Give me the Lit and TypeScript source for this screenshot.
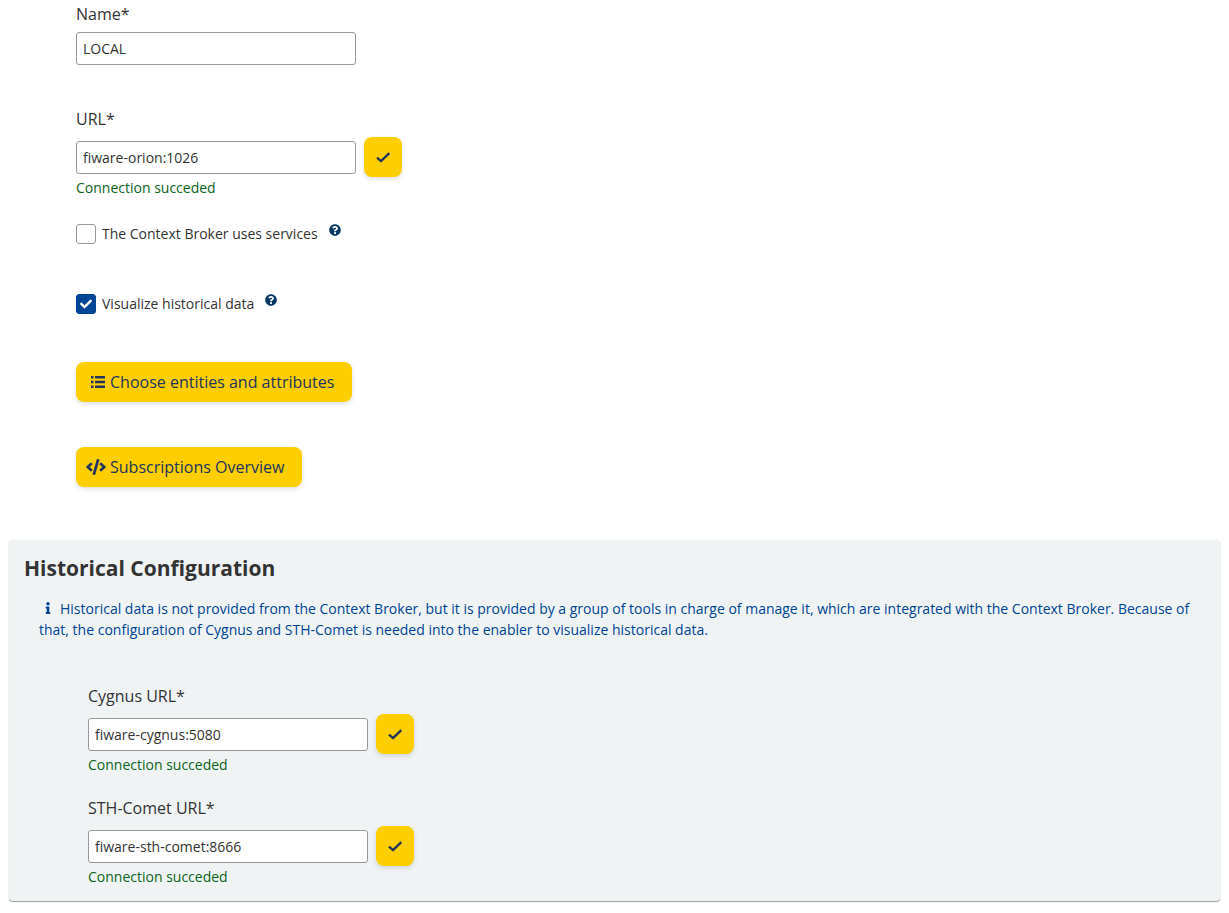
import { LitElement, html, svg, css } from "lit";
import { customElement, property } from "lit/decorators.js";

const icons = {
  check: {
    box: "0 0 18 18",
    art: svg`<path d="M3 9.600 7 13.200 15.300 5.200" fill="none" stroke="currentColor" stroke-width="2.300" stroke-linejoin="round"/>`,
  },
  tick: {
    box: "0 0 512 512",
    art: svg`<path d="M173.898 439.404l-166.4-166.4c-9.997-9.997-9.997-26.206 0-36.204l36.203-36.204c9.997-9.998 26.207-9.998 36.204 0L192 312.69 432.095 72.596c9.997-9.997 26.207-9.997 36.204 0l36.203 36.204c9.997 9.997 9.997 26.206 0 36.204l-294.4 294.401c-9.998 9.997-26.207 9.997-36.204-.001z" fill="currentColor"/>`,
  },
  list: {
    box: "0 0 14 12",
    art: svg`<path d="M0 0h2.5v2.5H0zM4 0h10v2.5H4zM0 4.7h2.5v2.6H0zM4 4.7h10v2.6H4zM0 9.5h2.5V12H0zM4 9.5h10V12H4z" fill="currentColor"/>`,
  },
  code: {
    box: "0 0 640 512",
    art: svg`<path d="M278.9 511.5l-61-17.7c-6.4-1.8-10-8.5-8.2-14.9L346.2 8.7c1.8-6.4 8.5-10 14.9-8.2l61 17.7c6.4 1.8 10 8.5 8.2 14.9L293.8 503.3c-1.9 6.4-8.5 10.1-14.9 8.2zm-114-112.2l43.5-46.4c4.6-4.9 4.3-12.7-.8-17.2L117 256l90.6-79.7c5.1-4.5 5.5-12.3.8-17.2l-43.5-46.4c-4.5-4.8-12.1-5.1-17-.5L3.8 247.2c-5.1 4.7-5.1 12.8 0 17.5l144.1 135.1c4.9 4.6 12.5 4.4 17-.5zm327.2.6l144.1-135.1c5.1-4.7 5.1-12.8 0-17.5L492.1 112.1c-4.8-4.5-12.4-4.3-17 .5L431.6 159c-4.6 4.9-4.3 12.7.8 17.2L523 256l-90.6 79.7c-5.1 4.5-5.5 12.3-.8 17.2l43.5 46.4c4.5 4.9 12.1 5.1 17 .6z" fill="currentColor"/>`,
  },
  question: {
    box: "0 0 512 512",
    art: svg`<path d="M504 256c0 136.997-111.043 248-248 248S8 392.997 8 256C8 119.083 119.043 8 256 8s248 111.083 248 248zM262.655 90c-54.497 0-89.255 22.957-116.549 63.758-3.536 5.286-2.353 12.415 2.715 16.258l34.699 26.31c5.205 3.947 12.621 3.008 16.665-2.122 17.864-22.658 30.113-35.797 57.303-35.797 20.429 0 45.698 13.148 45.698 32.958 0 14.976-12.363 22.667-32.534 33.976C247.128 238.528 216 254.941 216 296v4c0 6.627 5.373 12 12 12h56c6.627 0 12-5.373 12-12v-1.333c0-28.462 83.186-29.647 83.186-106.667 0-58.002-60.165-102-116.531-102zM256 338c-25.365 0-46 20.635-46 46 0 25.364 20.635 46 46 46s46-20.636 46-46c0-25.365-20.635-46-46-46z" fill="currentColor"/>`,
  },
  info: {
    box: "0 0 192 512",
    art: svg`<path d="M20 424.229h20V279.771H20c-11.046 0-20-8.954-20-20V212c0-11.046 8.954-20 20-20h112c11.046 0 20 8.954 20 20v212.229h20c11.046 0 20 8.954 20 20V492c0 11.046-8.954 20-20 20H20c-11.046 0-20-8.954-20-20v-47.771c0-11.046 8.954-20 20-20zM96 0C56.235 0 24 32.235 24 72s32.235 72 72 72 72-32.235 72-72S135.764 0 96 0z" fill="currentColor"/>`,
  },
};

const icon = (name: keyof typeof icons) =>
  html`<svg class="icon ${name}" viewBox=${icons[name].box} aria-hidden="true">${icons[name].art}</svg>`;

const base = css`
  * {
    box-sizing: border-box;
  }
  button {
    display: inline-flex;
    align-items: center;
    height: 40px;
    padding: 0;
    border: 0;
    border-radius: 8px;
    background: #ffce00;
    color: #22345c;
    font: inherit;
    line-height: 24px;
    box-shadow: 0 2px 5px rgba(0, 0, 0, 0.13);
    cursor: pointer;
  }
  .icon {
    flex: none;
    display: block;
  }
`;

@customElement("url-field")
class UrlField extends LitElement {
  @property() label = "";
  @property() value = "";
  @property() status = "";
  @property({ type: Boolean }) testable = false;

  static styles = [
    base,
    css`
      :host {
        display: block;
      }
      label {
        display: block;
        line-height: 24px;
        margin-bottom: 6px;
      }
      .row {
        display: flex;
        align-items: center;
        gap: 8px;
      }
      input {
        width: 280px;
        height: 33px;
        padding: 0 6px;
        border: 1px solid #999;
        border-radius: 3px;
        background: #fff;
        color: #333;
        font: inherit;
        font-size: 14px;
      }
      button {
        width: 38px;
        justify-content: center;
      }
      .check {
        width: 18px;
        height: 18px;
      }
      .status {
        margin: 0;
        font-size: 14px;
        line-height: 21px;
        color: #0b6420;
      }
    `,
  ];

  render() {
    return html`
      <label for="field">${this.label}</label>
      <div class="row">
        <input id="field" type="text" .value=${this.value} />
        ${this.testable
          ? html`<button type="button" aria-label="Test connection">${icon("check")}</button>`
          : null}
      </div>
      ${this.status ? html`<p class="status">${this.status}</p>` : null}
    `;
  }
}

@customElement("check-option")
class CheckOption extends LitElement {
  @property() label = "";
  @property({ type: Boolean }) checked = false;

  static styles = [
    base,
    css`
      :host {
        display: flex;
        gap: 11px;
        font-size: 14px;
        line-height: 20px;
      }
      label {
        display: grid;
        grid-template-columns: 20px auto;
        column-gap: 6px;
        align-items: center;
      }
      input {
        appearance: none;
        grid-area: 1 / 1;
        width: 20px;
        height: 20px;
        margin: 0;
        border: 1px solid #999;
        border-radius: 3px;
        background: #fff;
      }
      input:checked {
        border-color: #004494;
        background: #004494;
      }
      .tick {
        grid-area: 1 / 1;
        justify-self: center;
        width: 12px;
        height: 12px;
        color: #fff;
        pointer-events: none;
      }
      .question {
        width: 12px;
        height: 12px;
        color: #073763;
      }
    `,
  ];

  render() {
    return html`
      <label>
        <input
          type="checkbox"
          .checked=${this.checked}
          @change=${(e: Event) => (this.checked = (e.target as HTMLInputElement).checked)}
        />
        ${this.checked ? icon("tick") : null}
        <span>${this.label}</span>
      </label>
      ${icon("question")}
    `;
  }
}

@customElement("app-root")
class AppRoot extends LitElement {
  static styles = [
    base,
    css`
      :host {
        display: block;
        padding: 2px 9px 12px;
        background: #fff;
        color: #333;
        font-family: "Open Sans", "Noto Sans", sans-serif;
        font-size: 16px;
      }
      .broker {
        display: flex;
        flex-direction: column;
        align-items: flex-start;
        padding-left: 67px;
      }
      .name {
        margin-bottom: 42px;
      }
      .services {
        margin: 26px 0 50px;
      }
      .action {
        margin-top: 45px;
        padding: 0 18px 0 10px;
        gap: 4px;
      }
      .first {
        margin-top: 48px;
        padding-left: 15px;
        gap: 5px;
      }
      .list {
        width: 14px;
        height: 12px;
      }
      .code {
        width: 20px;
        height: 16px;
      }
      .panel {
        margin-top: 53px;
        padding: 14px 15px;
        border-radius: 4px;
        background: #eff3f4;
        box-shadow: 0 1px 1px rgba(0, 0, 0, 0.38), 0 0 2px rgba(0, 0, 0, 0.08);
      }
      h2 {
        margin: 0 0 16px;
        font-size: 21px;
        line-height: 28px;
        font-weight: 700;
      }
      .note {
        margin: 0;
        padding: 0 14px 0 15px;
        font-size: 14px;
        line-height: 21px;
        color: #004494;
      }
      .info {
        display: inline-block;
        width: 6px;
        height: 12px;
        margin: 0 9px 0 6px;
        vertical-align: baseline;
      }
      .tools {
        display: grid;
        gap: 21px;
        margin-top: 44px;
        padding-left: 64px;
      }
    `,
  ];

  render() {
    return html`
      <section class="broker">
        <url-field class="name" label="Name*" value="LOCAL"></url-field>
        <url-field label="URL*" value="fiware-orion:1026" status="Connection succeded" testable></url-field>
        <check-option class="services" label="The Context Broker uses services"></check-option>
        <check-option label="Visualize historical data" checked></check-option>
        <button type="button" class="action first">${icon("list")}Choose entities and attributes</button>
        <button type="button" class="action">${icon("code")}Subscriptions Overview</button>
      </section>
      <section class="panel">
        <h2>Historical Configuration</h2>
        <p class="note">
          ${icon("info")}Historical data is not provided from the Context Broker, but it is provided by a group of tools
          in charge of manage it, which are integrated with the Context Broker. Because of that, the configuration of
          Cygnus and STH-Comet is needed into the enabler to visualize historical data.
        </p>
        <div class="tools">
          <url-field label="Cygnus URL*" value="fiware-cygnus:5080" status="Connection succeded" testable></url-field>
          <url-field label="STH-Comet URL*" value="fiware-sth-comet:8666" status="Connection succeded" testable></url-field>
        </div>
      </section>
    `;
  }
}
